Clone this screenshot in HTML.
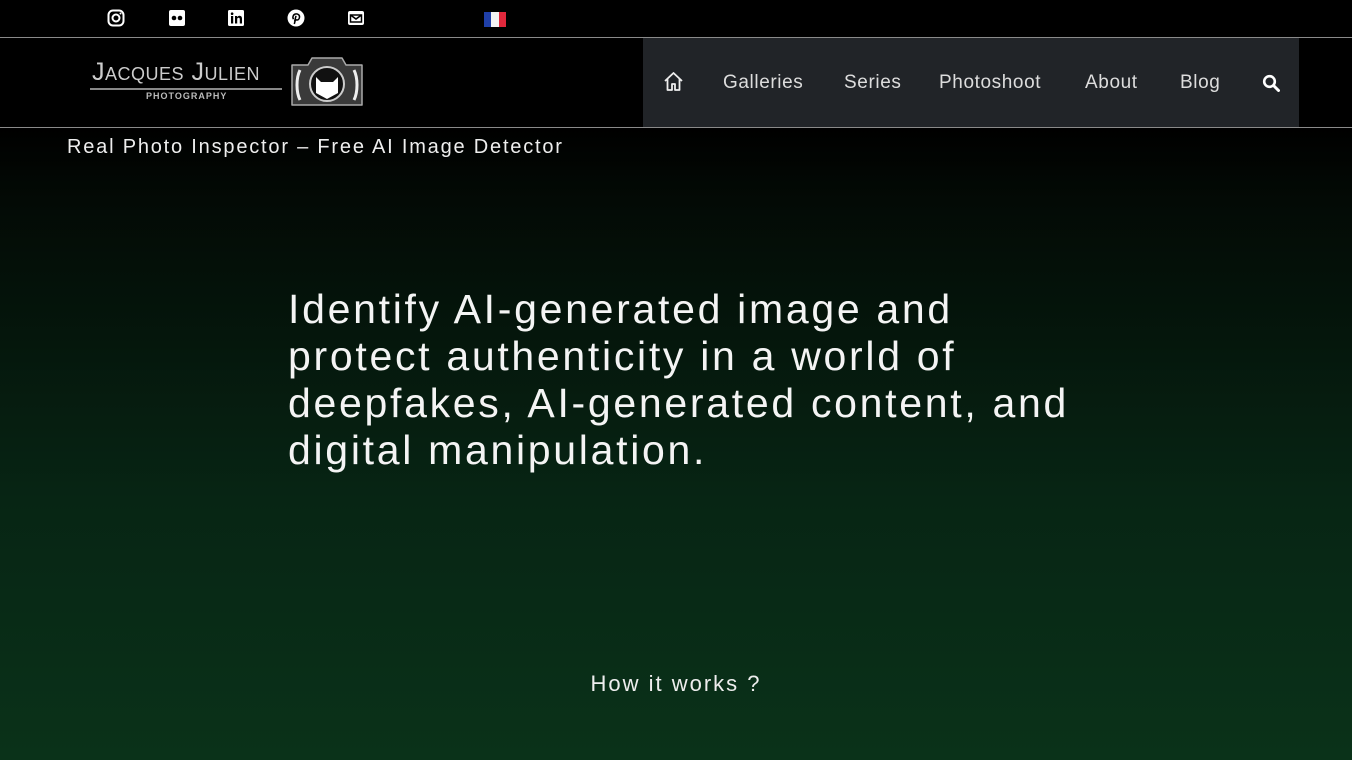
<!DOCTYPE html>
<html><head><meta charset="utf-8"><style>
*{margin:0;padding:0;box-sizing:border-box}
body{width:1352px;height:760px;overflow:hidden;font-family:"Liberation Sans",sans-serif;color:#fff;
background:linear-gradient(to bottom,#000 0,#000 128px,#030a05 200px,#072514 500px,#0a3219 760px)}
.top{height:38px;background:#000;border-bottom:1px solid #8a8a8a;position:relative}
.top svg{position:absolute;top:9px}
.hdr{height:90px;background:#000;border-bottom:1px solid #8a8a8a;position:relative}
.nav{position:absolute;left:643px;top:0;width:656px;height:89px;background:#212428}
.nav span{position:absolute;top:34px;font-size:19px;color:#ddd;letter-spacing:.6px}
h1{position:absolute;left:288px;top:286px;font-weight:normal;font-size:41px;line-height:47px;letter-spacing:2.7px;white-space:nowrap;color:#f4f4f4}
.t{position:absolute;left:67px;top:136px;font-size:20px;letter-spacing:1.8px;color:#eee}
.h{position:absolute;left:0;width:1352px;text-align:center;top:671px;font-size:22px;letter-spacing:2px;color:#eee}
</style></head><body>
<div class="top">
<svg style="left:107px" width="18" height="18" viewBox="0 0 18 18"><rect x="1.5" y="1.5" width="15" height="15" rx="4.5" fill="none" stroke="#fff" stroke-width="2"/><circle cx="9" cy="9" r="3.5" fill="none" stroke="#fff" stroke-width="2"/><circle cx="13.5" cy="4.5" r="1" fill="#fff"/></svg>
<svg style="left:168px" width="18" height="18" viewBox="0 0 18 18"><rect x="1" y="1" width="16" height="16" rx="2" fill="#fff"/><circle cx="6" cy="9" r="2.3" fill="#000"/><circle cx="12" cy="9" r="2.3" fill="#000"/></svg>
<svg style="left:227px" width="18" height="18" viewBox="0 0 18 18"><rect x="1" y="1" width="16" height="16" rx="1.5" fill="#fff"/><rect x="4" y="7" width="2.2" height="7.5" fill="#000"/><circle cx="5.1" cy="4.7" r="1.3" fill="#000"/><path d="M8 7h2v1.2c.6-1 1.6-1.4 2.6-1.4 1.6 0 2.4 1 2.4 3v4.7h-2.2v-4.3c0-1-.4-1.5-1.200-1.5-.9 0-1.4.6-1.4 1.6v4.2H8z" fill="#000"/></svg>
<svg style="left:287px" width="18" height="18" viewBox="0 0 18 18"><circle cx="9" cy="9" r="8.5" fill="#fff"/><path d="M8.3 5c2.8-.4 4.5 1.2 4.2 3.3-.3 2-1.7 3-3 2.7-.7-.2-1-.6-1-.6l-1.2 4.6M9 6.8l-1.4 5.6M6.5 10.2c-1.3-1.8-.3-4.6 1.8-5.2" fill="none" stroke="#000" stroke-width="1.5"/></svg>
<svg style="left:347px" width="18" height="18" viewBox="0 0 18 18"><rect x="1" y="2" width="16" height="14" rx="2" fill="#fff"/><path d="M3.5 6l5.5 4 5.5-4" fill="none" stroke="#000" stroke-width="1.6"/><rect x="3.5" y="6" width="11" height="7" fill="none" stroke="#000" stroke-width="1.5"/></svg>
<div style="position:absolute;left:484px;top:12px;width:22px;height:15px;display:flex"><i style="flex:1;background:#1f3fa8"></i><i style="flex:1;background:#f4f4f4"></i><i style="flex:1;background:#e0283c"></i></div>
</div>
<div class="hdr">
<div style="position:absolute;left:92px;top:20px;font-size:25px;color:#ccc;letter-spacing:.5px;font-variant:small-caps">Jacques Julien</div>
<div style="position:absolute;left:90px;top:50px;width:192px;height:2px;background:#888"></div>
<div style="position:absolute;left:146px;top:53px;font-size:9px;font-weight:bold;color:#bbb;letter-spacing:1px">PHOTOGRAPHY</div>
<svg style="position:absolute;left:290px;top:17px" width="74" height="52" viewBox="0 0 74 52"><path d="M2 10h16l4-7h30l4 7h16v40H2z" fill="#3a3a3a" stroke="#aaa" stroke-width="1.5" stroke-linejoin="round"/><circle cx="37" cy="29" r="17" fill="#111" stroke="#ccc" stroke-width="2"/><path d="M26 38l0-16 5 5h12l5-5v16l-11 6z" fill="#fff"/><path d="M10 15c-4 8-4 22 0 30M64 15c4 8 4 22 0 30" stroke="#eee" stroke-width="3" fill="none"/></svg>
<div class="nav">
<svg style="position:absolute;left:20px;top:33px" width="21" height="21" viewBox="0 0 21 21"><path d="M2 10L10.5 2 19 10M4.5 8v11h4.5v-6h3v6h4.5V8" fill="none" stroke="#eee" stroke-width="1.8" stroke-linejoin="round"/></svg>
<span style="left:80px">Galleries</span><span style="left:201px">Series</span><span style="left:296px">Photoshoot</span><span style="left:442px">About</span><span style="left:537px">Blog</span>
<svg style="position:absolute;left:619px;top:36px" width="18" height="18" viewBox="0 0 18 18"><circle cx="7.5" cy="7.5" r="5.3" fill="none" stroke="#fff" stroke-width="2.6"/><path d="M11.5 11.5l5 5" stroke="#fff" stroke-width="3" stroke-linecap="round"/></svg>
</div>
</div>
<div class="t">Real Photo Inspector – Free AI Image Detector</div>
<h1>Identify AI-generated image and<br>protect authenticity in a world of<br>deepfakes, AI-generated content, and<br>digital manipulation.</h1>
<div class="h">How it works ?</div>
</body></html>
